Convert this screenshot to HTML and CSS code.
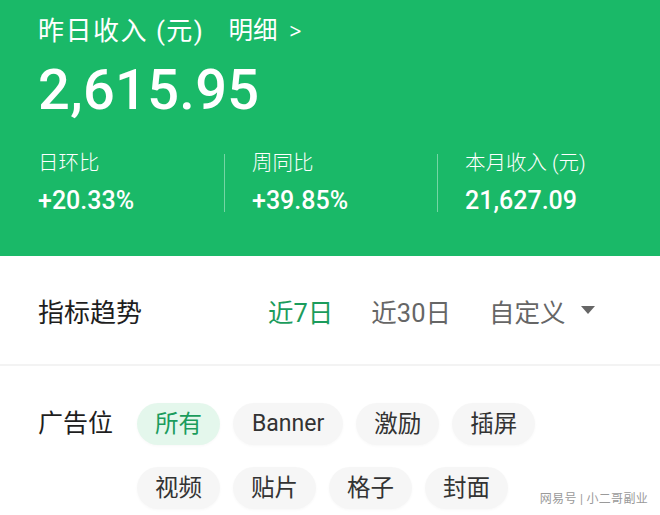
FILE: index.html
```html
<!DOCTYPE html>
<html lang="zh-CN">
<head>
<meta charset="utf-8">
<title>收入</title>
<link rel="stylesheet" href="styles.css">
</head>
<body>
<div class="page">
  <header class="hero">
    <div class="hero-title">
      <span class="hero-label">昨日收入 (元)</span>
      <span class="hero-link">明细 <span class="chev">&gt;</span></span>
    </div>
    <div class="hero-amount">2,615.95</div>
    <div class="stats">
      <div class="stat">
        <div class="stat-label">日环比</div>
        <div class="stat-value">+20.33%</div>
      </div>
      <div class="stat">
        <div class="stat-label">周同比</div>
        <div class="stat-value">+39.85%</div>
      </div>
      <div class="stat">
        <div class="stat-label">本月收入 (元)</div>
        <div class="stat-value">21,627.09</div>
      </div>
    </div>
  </header>

  <section class="trend">
    <div class="trend-title">指标趋势</div>
    <div class="tabs">
      <span class="tab active">近7日</span>
      <span class="tab">近30日</span>
      <span class="tab custom">自定义 <span class="caret"></span></span>
    </div>
  </section>

  <section class="filter">
    <div class="filter-label">广告位</div>
    <div class="chips">
      <span class="chip active">所有</span>
      <span class="chip latin">Banner</span>
      <span class="chip">激励</span>
      <span class="chip">插屏</span>
      <span class="chip">视频</span>
      <span class="chip">贴片</span>
      <span class="chip">格子</span>
      <span class="chip">封面</span>
    </div>
  </section>

  <div class="watermark">网易号 | 小二哥副业</div>
</div>
</body>
</html>
```

FILE: styles.css
```css
* { box-sizing: border-box; }
html, body {
  margin: 0;
  padding: 0;
  background: #ffffff;
}
body {
  font-family: Roboto, "Noto Sans CJK SC", "Noto Sans", sans-serif;
  color: #222;
}
.page {
  position: relative;
  width: 660px;
  height: 515px;
  overflow: hidden;
}
.hero {
  background: #1ab968;
  color: #fff;
  height: 256px;
  padding: 12px 0 0 38px;
}
.hero-title {
  display: flex;
  align-items: center;
  height: 32px;
  font-size: 26px;
}
.hero-label { margin-right: 24px; letter-spacing: 1.5px; }
.hero-link { font-size: 24.5px; }
.chev {
  font-family: "Noto Sans", sans-serif;
  font-size: 21px;
  margin-left: 6px;
}
.hero-amount {
  margin-top: 13px;
  font-size: 56px;
  font-weight: 500;
  line-height: 66px;
  letter-spacing: 0.3px;
}
.stats {
  display: flex;
  margin-top: 31px;
}
.stat {
  width: 186px;
  height: 58px;
  display: flex;
  flex-direction: column;
  justify-content: space-between;
}
.stat + .stat {
  border-left: 1px solid rgba(255,255,255,0.4);
  padding-left: 27px;
  width: 213px;
}
.stat-label {
  font-size: 20.5px;
  line-height: 20px;
  margin-top: -1px;
  font-weight: 300;
}
.stat-value {
  font-size: 25px;
  line-height: 24px;
  font-weight: 500;
  margin-bottom: -1px;
}
.trend {
  display: flex;
  align-items: center;
  height: 110px;
  padding-left: 38px;
  border-bottom: 2px solid #f3f3f3;
}
.trend-title {
  width: 230px;
  font-size: 26px;
  color: #1e1e1e;
}
.tabs {
  display: flex;
  align-items: center;
  gap: 38px;
  font-size: 25.5px;
  color: #666;
}
.tab.active { color: #1b9c5c; }
.custom {
  display: flex;
  align-items: center;
}
.caret {
  width: 0;
  height: 0;
  margin-left: 15px;
  border-left: 7px solid transparent;
  border-right: 7px solid transparent;
  border-top: 8px solid #666;
}
.filter {
  display: flex;
  align-items: flex-start;
  padding: 37px 0 0 38px;
}
.filter-label {
  width: 99px;
  height: 42px;
  line-height: 42px;
  font-size: 25px;
  color: #1e1e1e;
}
.chips {
  display: flex;
  flex-wrap: wrap;
  row-gap: 22px;
  column-gap: 13px;
  width: 420px;
}
.chip {
  height: 42px;
  line-height: 42px;
  padding: 0 18px;
  border-radius: 21px;
  background: #f6f6f6;
  font-size: 23.5px;
  color: #333;
  box-shadow: 0 1px 3px rgba(0,0,0,0.03);
}
.chip.latin {
  font-size: 23px;
  padding: 0 19px;
}
.chip.active {
  background: #e4f7ec;
  color: #1b9c5c;
}
.watermark {
  position: absolute;
  right: 12px;
  bottom: 9px;
  font-size: 12px;
  color: #9a9a9a;
  letter-spacing: 0.3px;
}
```
